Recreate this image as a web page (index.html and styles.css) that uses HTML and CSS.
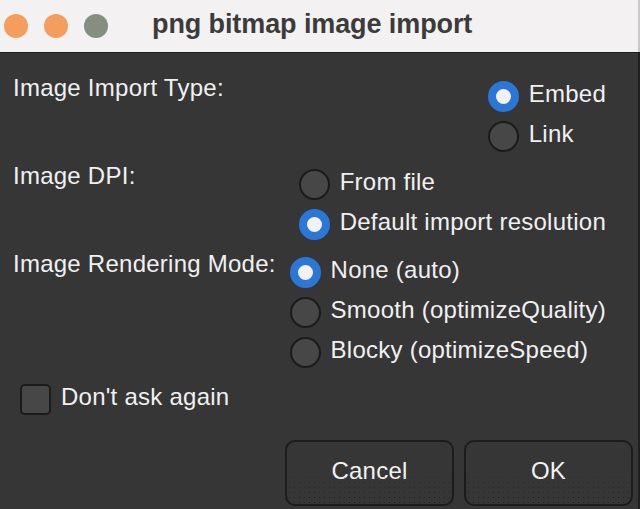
FILE: index.html
```html
<!DOCTYPE html>
<html lang="en">
<head>
<meta charset="utf-8">
<title>png bitmap image import</title>
<link rel="stylesheet" href="styles.css">
</head>
<body>
<div class="window">
  <header class="titlebar">
    <div class="lights">
      <span class="light light-close"></span>
      <span class="light light-min"></span>
      <span class="light light-max"></span>
    </div>
    <h1 class="title">png bitmap image import</h1>
  </header>
  <main class="content">
    <section class="group">
      <div class="label">Image Import Type:</div>
      <div class="options">
        <div class="option"><span class="radio checked"></span><span class="opt-text">Embed</span></div>
        <div class="option"><span class="radio"></span><span class="opt-text">Link</span></div>
      </div>
    </section>
    <section class="group">
      <div class="label">Image DPI:</div>
      <div class="options">
        <div class="option"><span class="radio"></span><span class="opt-text">From file</span></div>
        <div class="option"><span class="radio checked"></span><span class="opt-text">Default import resolution</span></div>
      </div>
    </section>
    <section class="group">
      <div class="label">Image Rendering Mode:</div>
      <div class="options">
        <div class="option"><span class="radio checked"></span><span class="opt-text">None (auto)</span></div>
        <div class="option"><span class="radio"></span><span class="opt-text">Smooth (optimizeQuality)</span></div>
        <div class="option"><span class="radio"></span><span class="opt-text">Blocky (optimizeSpeed)</span></div>
      </div>
    </section>
    <div class="check-row"><span class="checkbox"></span><span class="opt-text">Don't ask again</span></div>
    <div class="buttons">
      <button class="btn" type="button">Cancel</button>
      <button class="btn" type="button">OK</button>
    </div>
  </main>
</div>
</body>
</html>
```
FILE: styles.css
```css
* { box-sizing: border-box; }
html, body {
  margin: 0;
  padding: 0;
  background: #363636;
}
body {
  font-family: "Liberation Sans", Arial, sans-serif;
  color: #f1f0f1;
}
.window {
  width: 640px;
  height: 509px;
  overflow: hidden;
  display: flex;
  flex-direction: column;
}
.titlebar {
  height: 52px;
  flex: none;
  background: #f3f1f2;
  display: flex;
  align-items: center;
  padding-left: 4px;
  border-right: 2px solid #c9c8c9;
}
.lights {
  display: flex;
  gap: 16px;
}
.light {
  width: 24px;
  height: 24px;
  border-radius: 50%;
  background: #f59d5e;
}
.light-max { background: #858f7f; }
.title {
  margin: 0 0 4px 44px;
  font-size: 27px;
  font-weight: bold;
  color: #3b3b3b;
  letter-spacing: -0.1px;
}
.content {
  flex: 1;
  border-top: 1px solid #1f1f1f;
  border-right: 2px solid #1f1f1f;
  padding: 15px 0 0 13px;
  font-size: 24px;
  letter-spacing: 0.25px;
}
.group {
  display: flex;
  align-items: flex-start;
  padding-right: 32px;
  margin-bottom: 2px;
}
.label {
  line-height: 40px;
}
.options {
  margin-left: auto;
  margin-top: 6px;
  display: flex;
  flex-direction: column;
}
.option, .check-row {
  display: flex;
  align-items: center;
  height: 40px;
  gap: 10px;
}
.opt-text {
  line-height: 40px;
  white-space: nowrap;
}
.radio {
  width: 31px;
  height: 31px;
  border-radius: 50%;
  flex: none;
  margin-top: 4px;
  background: #474747;
  border: 2px solid #1b1b1b;
}
.radio.checked {
  background: #f3f1f3;
  border: 8px solid #2b77d8;
}
.check-row {
  margin-top: 7px;
  padding-left: 7px;
}
.checkbox {
  width: 31px;
  height: 31px;
  flex: none;
  margin-top: 4px;
  border-radius: 5px;
  background: #474747;
  border: 2px solid #1b1b1b;
}
.buttons {
  display: flex;
  justify-content: flex-end;
  gap: 10px;
  margin-top: 23px;
  padding-right: 5px;
}
.btn {
  position: relative;
  width: 169px;
  height: 66px;
  border-radius: 10px;
  border: 2px solid #1c1c1c;
  background: #363636;
  color: #f3f2f3;
  font-family: "Liberation Sans", Arial, sans-serif;
  font-size: 24px;
  letter-spacing: 0.25px;
  padding: 0 0 5px 0;
  overflow: hidden;
}
.btn::after {
  content: "";
  position: absolute;
  left: 0;
  right: 0;
  bottom: 0;
  height: 55%;
  background-image: radial-gradient(circle, #202020 0.7px, transparent 1px);
  background-size: 5px 5px;
  -webkit-mask-image: linear-gradient(to bottom, transparent, #000);
  mask-image: linear-gradient(to bottom, transparent, #000);
  pointer-events: none;
}
```
